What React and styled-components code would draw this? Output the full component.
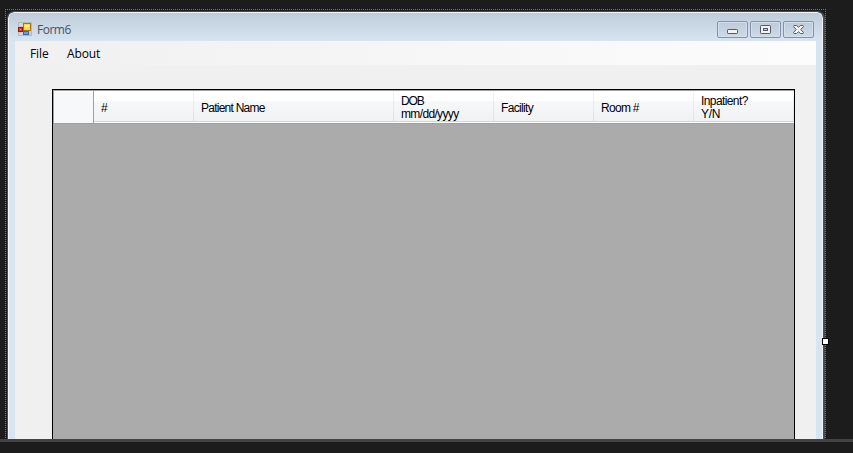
import React from 'react';
import styled, { createGlobalStyle } from 'styled-components';

const GlobalStyle = createGlobalStyle`
  * { box-sizing: border-box; }
  body { margin: 0; background: #1c1c1c; overflow: hidden; }
`;

const Workspace = styled.main`
  width: 853px;
  height: 453px;
  display: flex;
  flex-direction: column;
  background: #1c1c1c;
  overflow: hidden;
`;

const DesignSurface = styled.section`
  position: relative;
  height: 439px;
  padding: 9px 0 0 5px;
  overflow: hidden;
`;

const SplitBar = styled.div`
  height: 3px;
  background: #434346;
`;

const Selection = styled.div`
  width: 821px;
  height: 430px;
  padding: 2px 1px 0 2px;
  background:
    repeating-linear-gradient(90deg, #77776f 0 1px, #1c1c1c 1px 2px) 0 0 / 821px 1px no-repeat,
    repeating-linear-gradient(180deg, #77776f 0 1px, #1c1c1c 1px 2px) 0 0 / 1px 430px no-repeat,
    repeating-linear-gradient(180deg, #77776f 0 1px, #1c1c1c 1px 2px) 820px 0 / 1px 430px no-repeat;
`;

const ResizeHandle = styled.div`
  position: absolute;
  left: 822px;
  top: 338px;
  width: 7px;
  height: 7px;
  border: 1px solid #000;
  background: #fff;
`;

const Window = styled.div`
  height: 428px;
  border: solid #4a4b4d;
  border-width: 1px 2px 0 1px;
  border-radius: 7px 7px 0 0;
  overflow: hidden;
`;

const Frame = styled.div`
  height: 427px;
  border: solid #f0f4f9;
  border-width: 1px 1px 0 1px;
  border-radius: 6px 6px 0 0;
  padding: 0 6px;
  background: linear-gradient(#bfcddb 0, #d7e4f2 28px);
`;

const TitleBar = styled.header`
  height: 28px;
  display: flex;
  align-items: flex-start;
  padding: 8px 2px 0 3px;
`;

const Title = styled.span`
  flex: 1;
  margin: 0 0 0 5px;
  font: 12px/18px "Open Sans", "Noto Sans", sans-serif;
  letter-spacing: -0.5px;
  color: #4b5360;
`;

const Controls = styled.div`
  display: flex;
  gap: 2px;
`;

const ControlButton = styled.button`
  width: 31px;
  height: 17px;
  padding: 0;
  border: 1px solid #8592ad;
  border-radius: 2px;
  background: linear-gradient(#bdcbda, #cddae8);
  box-shadow: inset 0 0 0 1px #d3dfeb;
  display: grid;
  place-items: center;
  svg { display: block; }
`;

const MenuBar = styled.nav`
  height: 24px;
  display: flex;
  gap: 19px;
  padding-left: 15px;
  background: linear-gradient(90deg, #f0f0f0, #fcfcfc);
`;

const MenuItem = styled.span`
  width: ${(p) => p.$width}px;
  white-space: nowrap;
  font: 12px/25px "Open Sans", "Noto Sans", sans-serif;
  letter-spacing: ${(p) => p.$track}px;
  color: #000;
`;

const Client = styled.div`
  height: 374px;
  padding: 24px 21px 0 37px;
  background: #f0f0f0;
`;

const DataGrid = styled.div`
  height: 360px;
  border: 1px solid #000;
  background: #ababab;
`;

const HeaderRow = styled.div`
  height: 34px;
  display: grid;
  grid-template-columns: 41px 100px 200px 100px 100px 100px 100px;
  border-top: 1px solid #a0a0a0;
  border-bottom: 1px solid #a0a0a0;
  background: #f7f8fa;
`;

const CornerCell = styled.div`
  border: solid #a0a0a0;
  border-width: 0 1px;
  background: #f7f8fa;
  box-shadow: inset 0 1px #fff;
`;

const ColumnHeader = styled.div`
  height: 32px;
  display: flex;
  align-items: center;
  padding: 2px 0 0 7px;
  white-space: pre;
  font: 12px/13px "Liberation Sans", Arial, sans-serif;
  color: #000;
  background:
    linear-gradient(#fff, #fff) 0 31px / 100% 1px no-repeat,
    linear-gradient(#d5d5d5, #d5d5d5) 0 30px / 100% 1px no-repeat,
    linear-gradient(#f4f4f4, #dedfe0) 100% 0 / 1px 30px no-repeat,
    linear-gradient(#fff 0 10px, #f7f8fa 10px, #f1f2f4 30px);
`;

const Line = styled.span`
  display: block;
  letter-spacing: ${(p) => p.$track}px;
`;

const columns = [
  [['#', 0]],
  [['Patient Name', -0.75]],
  [['DOB', -1.1], ['mm/dd/yyyy', -0.65]],
  [['Facility', -0.65]],
  [['Room #', -0.7]],
  [['Inpatient?', -0.6], ['Y/N', -0.3]],
];

function FormIcon() {
  return (
    <svg width="14" height="15" viewBox="0 -1 14 15" shapeRendering="crispEdges">
      <path d="M.5 .5h13v13H.5z" fill="#cbcac6" stroke="#b9b9b7" />
      <path d="M1 1h4v3H1zM1 11h4v2H1z" fill="#d5d8da" />
      <path d="M5.5 1.5h7v7h-7z" fill="#ffd84b" stroke="#a87510" />
      <path d="M7 3h4v2H7z" fill="#fff2a0" />
      <path d="M.5 5.5h4v4h-4z" fill="#d3432f" stroke="#96170f" />
      <path d="M2 7h1v1H2z" fill="#f6a293" />
      <path d="M5.5 9.500h5v3h-5z" fill="#5f9df0" stroke="#3467b5" />
    </svg>
  );
}

function MinimizeIcon() {
  return (
    <svg width="11" height="13" viewBox="0 0 11 13">
      <rect x=".5" y="6.500" width="10" height="4" rx=".7" fill="#f3f3f1" stroke="#545870" />
    </svg>
  );
}

function RestoreIcon() {
  return (
    <svg width="11" height="9" viewBox="0 0 11 9">
      <rect x=".5" y=".5" width="10" height="8" rx=".7" fill="#f3f3f1" stroke="#545870" />
      <rect x="3.500" y="3.500" width="4" height="2" fill="#bdcad8" stroke="#545870" />
    </svg>
  );
}

function CloseIcon() {
  return (
    <svg width="11" height="9" viewBox="0 0 11 9">
      <path d="M1 .5h2.500l2 1.700 2-1.700H10l.5 1-2.700 3 2.700 3-.5 1H7.500l-2-1.700-2 1.700H1l-.5-1 2.700-3-2.700-3z" fill="#f3f3f1" stroke="#545870" />
    </svg>
  );
}

export default function App() {
  return (
    <Workspace>
      <GlobalStyle />
      <DesignSurface>
        <Selection>
          <Window>
            <Frame>
              <TitleBar>
                <FormIcon />
                <Title>Form6</Title>
                <Controls>
                  <ControlButton aria-label="Minimize"><MinimizeIcon /></ControlButton>
                  <ControlButton aria-label="Maximize"><RestoreIcon /></ControlButton>
                  <ControlButton aria-label="Close"><CloseIcon /></ControlButton>
                </Controls>
              </TitleBar>
              <MenuBar>
                <MenuItem $width={18} $track={-0.1}>File</MenuItem>
                <MenuItem $width={34} $track={-0.1}>About</MenuItem>
              </MenuBar>
              <Client>
                <DataGrid>
                  <HeaderRow>
                    <CornerCell />
                    {columns.map((lines) => (
                      <ColumnHeader key={lines[0][0]}>
                        <div>
                          {lines.map(([text, track]) => (
                            <Line key={text} $track={track}>{text}</Line>
                          ))}
                        </div>
                      </ColumnHeader>
                    ))}
                  </HeaderRow>
                </DataGrid>
              </Client>
            </Frame>
          </Window>
        </Selection>
        <ResizeHandle />
      </DesignSurface>
      <SplitBar />
    </Workspace>
  );
}
